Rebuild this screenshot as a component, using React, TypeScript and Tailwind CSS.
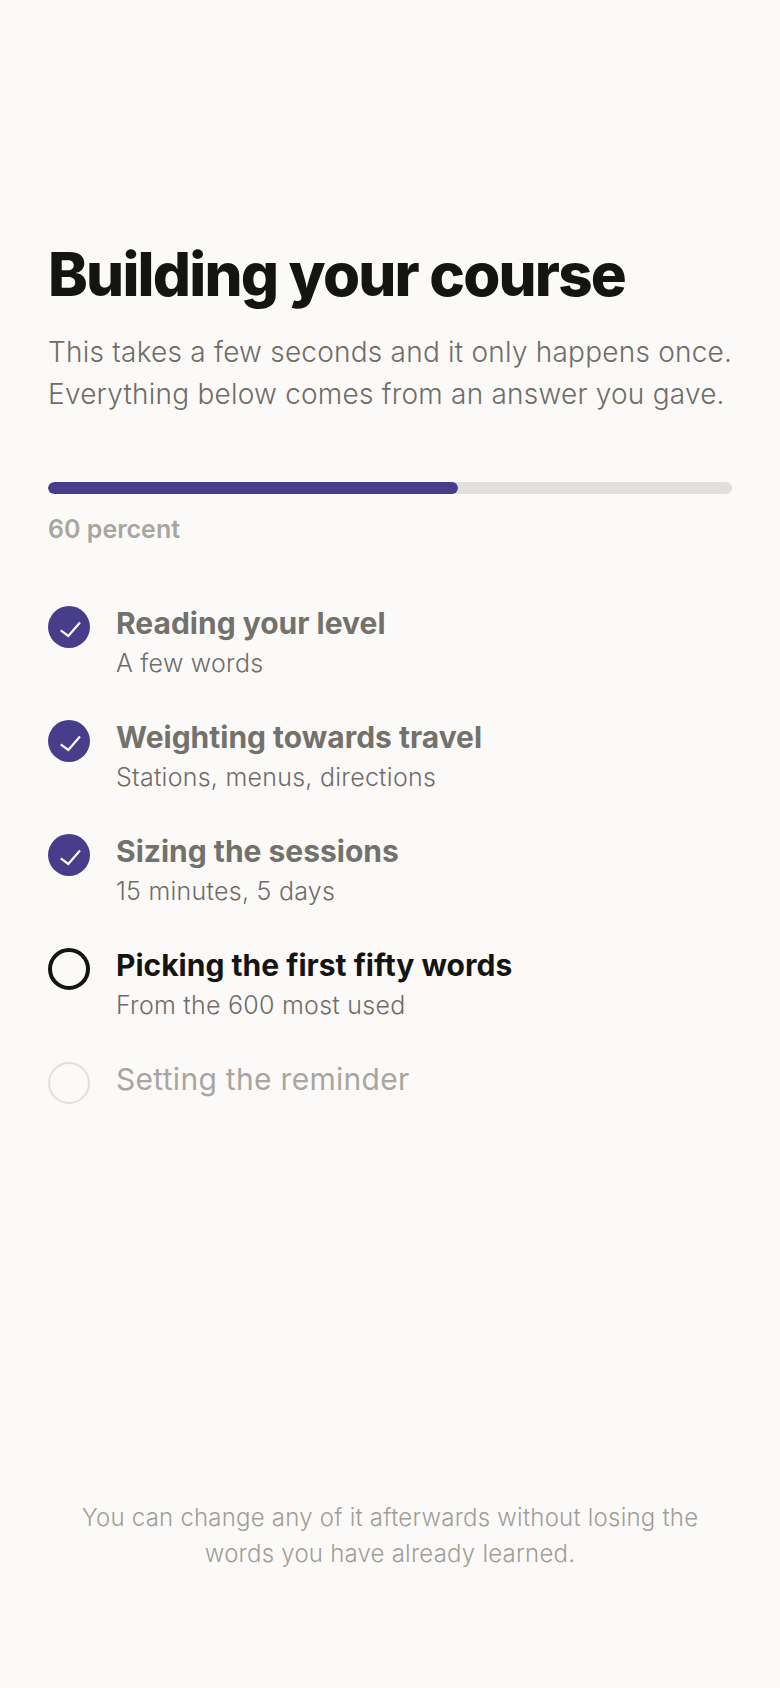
const steps = [
  { title: "Reading your level", detail: "A few words", state: "done" },
  { title: "Weighting towards travel", detail: "Stations, menus, directions", state: "done" },
  { title: "Sizing the sessions", detail: "15 minutes, 5 days", state: "done" },
  { title: "Picking the first fifty words", detail: "From the 600 most used", state: "active" },
  { title: "Setting the reminder", detail: "", state: "todo" },
];

function StepMark({ state }: { state: string }) {
  if (state === "done") {
    return (
      <div className="h-[42px] w-[42px] shrink-0 rounded-full bg-[#483d8b]">
        <svg width="42" height="42" viewBox="0 0 42 42" fill="none" stroke="#fcfaf8" strokeWidth="2.2">
          <path d="M12.7 24.3l7.6 5.6L32 16.5" />
        </svg>
      </div>
    );
  }
  if (state === "active") {
    return <div className="h-[42px] w-[42px] shrink-0 rounded-full border-[4px] border-[#141412]" />;
  }
  return <div className="h-[42px] w-[42px] shrink-0 rounded-full border-2 border-[#e0dfdc]" />;
}

export default function App() {
  return (
    <div className="flex h-[1688px] flex-col bg-[#fcfaf8] px-[48px] pt-[235px] font-['Inter',sans-serif]">
      <h1 className="text-[60px] leading-[78px] font-extrabold tracking-[-0.03em] text-[#141412]">Building your course</h1>
      <p className="mt-[18px] text-[28px] leading-[42px] font-light tracking-[0.008em] whitespace-nowrap text-[#6f6d68]">
        This takes a few seconds and it only happens once.
        <br />
        Everything below comes from an answer you gave.
      </p>
      <div className="mt-[67px] h-[12px] overflow-hidden rounded-full bg-[#e0dfdc]">
        <div className="h-full w-[60%] rounded-full bg-[#483d8b]" />
      </div>
      <div className="mt-[17px] text-[25px] leading-[36px] font-semibold text-[#a8a6a1]">60 percent</div>
      <ul className="mt-[56px] flex flex-col gap-[34px]">
        {steps.map((s) => (
          <li key={s.title} className="flex gap-[26px]">
            <div className="pt-[3px]">
              <StepMark state={s.state} />
            </div>
            <div>
              <div
                className={
                  s.state === "todo"
                    ? "text-[30px] leading-[40px] font-normal tracking-[0.01em] text-[#a8a6a1]"
                    : s.state === "active"
                      ? "text-[30px] leading-[40px] font-bold text-[#141412]"
                      : "text-[30px] leading-[40px] font-bold text-[#73716c]"
                }
              >
                {s.title}
              </div>
              {s.detail && <div className="text-[25px] leading-[40px] font-light tracking-[0.01em] text-[#6f6d68]">{s.detail}</div>}
            </div>
          </li>
        ))}
      </ul>
      <p className="mt-auto mb-[116px] text-center text-[24px] leading-[36px] font-light tracking-[0.009em] text-[#a09e99]">
        You can change any of it afterwards without losing the
        <br />
        words you have already learned.
      </p>
    </div>
  );
}
